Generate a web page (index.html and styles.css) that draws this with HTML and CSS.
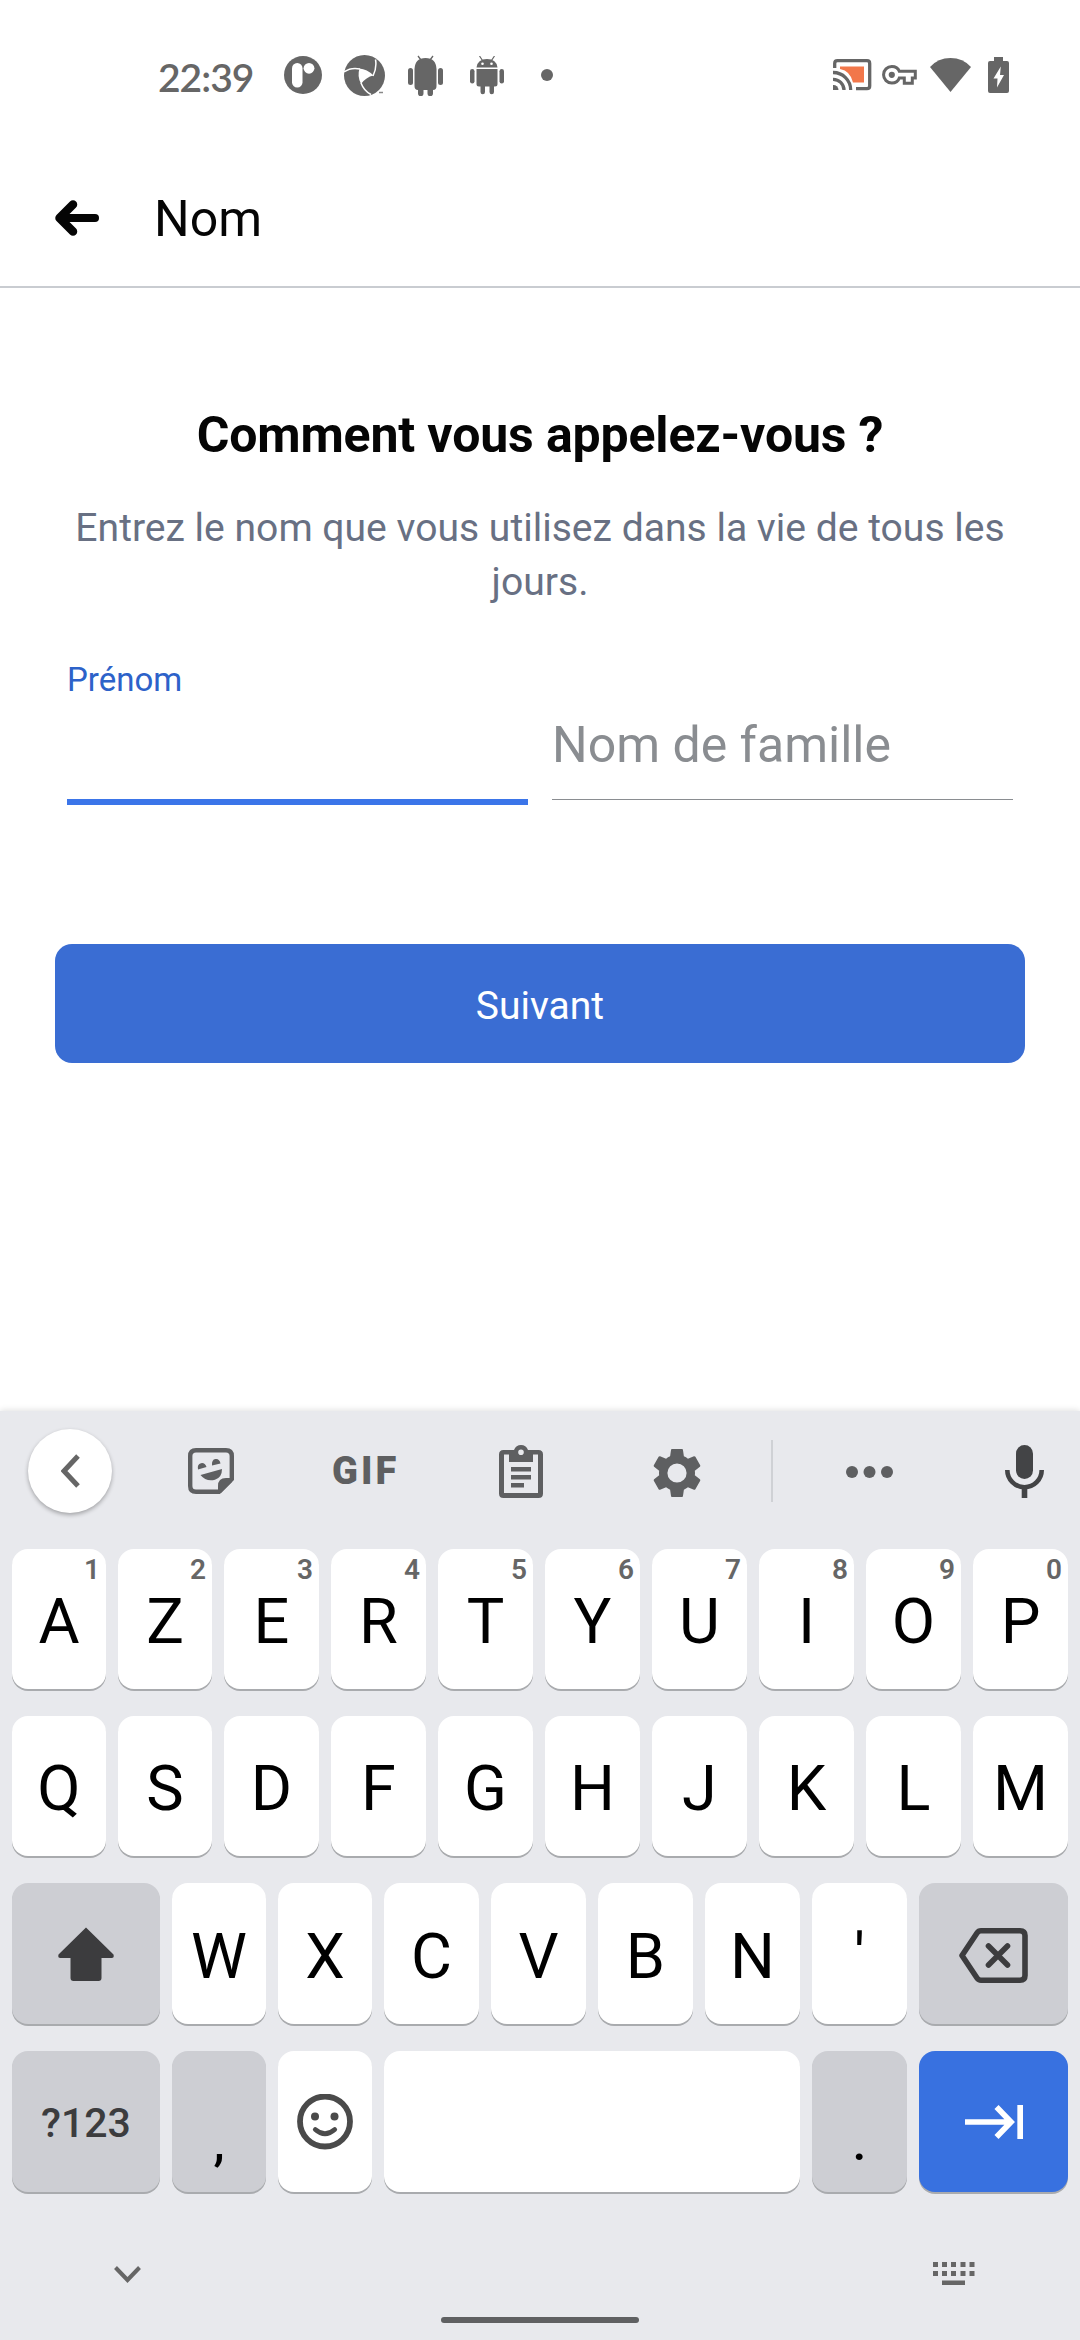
FILE: index.html
```html
<!DOCTYPE html>
<html lang="fr">
<head>
<meta charset="utf-8">
<title>Nom</title>
<link rel="stylesheet" href="styles.css">
</head>
<body>
<div class="screen">
  <div class="status">
    <span class="clock">22:39</span>
    <div class="notifs">
      <svg width="38" height="38" viewBox="0 0 38 38"><circle cx="19" cy="19" r="19" fill="#666"/><rect x="8" y="7" width="10.5" height="24.5" rx="5.2" fill="#fff"/><circle cx="25" cy="12.3" r="5.4" fill="#fff"/></svg>
      <svg width="41" height="41" viewBox="0 0 41 41"><circle cx="20.5" cy="20.5" r="20.5" fill="#666"/><path d="M15.500 13.500Q23 14 29.500 20.500Q22 22 17 29Q13 21 15.500 13.500Z" fill="#fff"/><path d="M0 17Q7 12 16 14M31.500 4.500Q33 13 29 21M17 28Q20 36 27 39.500" fill="none" stroke="#fff" stroke-width="1.500"/><path d="M27 41l7-3.500 2-1 5 1v3.500z" fill="#fff"/><path d="M35 37.500h4" stroke="#888" stroke-width="1.500"/></svg>
      <svg width="35" height="41" viewBox="0 0 35 41" fill="#666"><path d="M10 1l3 4M25 1l-3 4" stroke="#666" stroke-width="1.300"/><path d="M6.500 14Q7 3 17.500 3T28.500 14V31Q28.500 35 25 35V38.500a2.500 2.500 0 0 1-5.500 0V35H15.500V38.500a2.500 2.500 0 0 1-5.500 0V35Q6.500 35 6.500 31Z"/><rect x="0" y="13" width="5" height="17" rx="2.500"/><rect x="30" y="13" width="5" height="17" rx="2.500"/></svg>
      <svg width="34" height="39" viewBox="0 0 34 39" fill="#666"><path d="M9.500 0l3 4.500M24.500 0l-3 4.500" stroke="#666" stroke-width="1.200"/><path d="M6.500 11.500Q7.500 3 17 3T27.500 11.500Z"/><circle cx="12.500" cy="7.800" r="1.300" fill="#fff"/><circle cx="21.500" cy="7.800" r="1.300" fill="#fff"/><path d="M6.500 13H27.500V28Q27.500 30.500 25 30.500H24V36a2.200 2.200 0 0 1-4.500 0V30.500H15V36a2.200 2.200 0 0 1-4.500 0V30.500H9Q6.500 30.500 6.500 28Z"/><rect x="0" y="13" width="4.500" height="14.500" rx="2.200"/><rect x="29.500" y="13" width="4.500" height="14.500" rx="2.200"/></svg>
      <span class="dot"></span>
    </div>
    <div class="system">
      <svg class="cast" width="39" height="32" viewBox="0 0 39 32"><path d="M7 7.500H31V23.500H20Q17.500 12 7 10Z" fill="#f2774a"/><path d="M1.700 9V4.500Q1.700 1.700 4.500 1.700H34Q36.700 1.700 36.700 4.500V27Q36.700 29.700 34 29.700H23M0 13.500A17.500 17.500 0 0 1 17.700 31M0 20.300A10.800 10.800 0 0 1 11 31" fill="none" stroke="#666" stroke-width="3.300"/><path d="M0 26A5 5 0 0 1 5.500 31H0Z" fill="#666"/></svg>
      <svg class="key-icon" width="35" height="20" viewBox="0 0 35 20"><path d="M9.800 1.500C14 1.500 16.500 4 17.300 6.300H33.300V13H30.300V18.300H22.300V13H17.300C16.500 15.500 14 18 9.800 18A8.200 8.200 0 0 1 9.800 1.500Z" fill="none" stroke="#666" stroke-width="3"/><circle cx="9.800" cy="9.800" r="3.100" fill="#666"/></svg>
      <svg class="wifi" width="41" height="34" viewBox="0 0 41 34"><path d="M0 9Q8 0 20.500 0T41 9L20.500 34Z" fill="#666"/></svg>
      <svg class="battery" width="21" height="36" viewBox="0 0 21 36"><path d="M2 4H6V0H15V4H19Q21 4 21 6V34Q21 36 19 36H2Q0 36 0 34V6Q0 4 2 4Z" fill="#666"/><path d="M12.800 9.500L5.500 21.500H9.500L9 30.500L16 18H12Z" fill="#fff"/></svg>
    </div>
  </div>

  <header class="header">
    <svg width="44" height="37" viewBox="0 0 44 37" fill="none" stroke="#050505" stroke-linecap="round" stroke-linejoin="round"><path d="M18 4.500L4.500 18L18 31.500" stroke-width="8.500"/><path d="M7 18H40" stroke-width="8"/></svg>
    <span class="header-title">Nom</span>
  </header>

  <main class="form">
    <h1 class="question">Comment vous appelez-vous ?</h1>
    <p class="help">Entrez le nom que vous utilisez dans la vie de tous les jours.</p>
    <div class="fields">
      <div class="field field-active"><span class="label">Prénom</span></div>
      <div class="field"><span class="placeholder">Nom de famille</span></div>
    </div>
    <div class="submit">Suivant</div>
  </main>

  <section class="keyboard">
    <div class="toolbar">
      <span class="back"><svg width="19" height="34" viewBox="0 0 19 34"><path d="M17 2L3 17L17 32" fill="none" stroke="#666" stroke-width="5"/></svg></span>
      <svg class="sticker" width="46" height="46" viewBox="0 0 46 46"><path d="M8 2.200H38Q43.800 2.200 43.800 8V31L31 43.800H8Q2.200 43.800 2.200 38V8Q2.200 2.200 8 2.200Z" fill="none" stroke="#5e5f61" stroke-width="4.400"/><path d="M30 45V38Q30 30 38 30H45L44 34L33 45Z" fill="#5e5f61"/><path d="M10 21.500Q9 16 13 15.200Q17 14.500 18.500 19ZM24 17.500Q23.500 11.500 27.500 11Q31.500 10.500 32.500 15.500ZM12.500 27L34 21Q34 29.500 27 31.800Q18 34 12.500 27Z" fill="#5e5f61"/></svg>
      <span class="gif">GIF</span>
      <svg class="clipboard" width="44" height="53" viewBox="0 0 44 53" fill="#5e5f61"><path fill-rule="evenodd" d="M4.500 5H15Q17 0 22 0T29 5H39.500Q44 5 44 9.500V48.500Q44 53 39.500 53H4.500Q0 53 0 48.500V9.500Q0 5 4.500 5ZM5 9.500V48H39V9.500H34V17H10V9.500ZM22 4.500A2.800 2.800 0 1 0 22 10.100A2.800 2.800 0 1 0 22 4.500Z"/><path d="M12 22H32V26.500H12ZM12 30H32V34.500H12ZM12 38H25V42.500H12Z"/></svg>
      <svg class="gear" width="48" height="48" viewBox="2 2 20 20"><path fill="#5e5f61" d="M19.430 12.980c.04-.32.070-.64.070-.98s-.03-.66-.07-.98l2.110-1.650c.19-.15.240-.42.120-.64l-2-3.460c-.12-.22-.39-.3-.61-.22l-2.490 1c-.52-.4-1.080-.73-1.690-.98l-.38-2.650C14.460 2.180 14.250 2 14 2h-4c-.25 0-.46.180-.49.420l-.38 2.650c-.61.250-1.170.590-1.690.980l-2.490-1c-.23-.09-.49 0-.61.220l-2 3.460c-.13.220-.07.490.120.640l2.110 1.650c-.04.320-.07.650-.07.980s.03.660.070.980l-2.110 1.650c-.19.150-.24.420-.12.640l2 3.460c.12.220.39.300.61.220l2.490-1c.52.400 1.080.730 1.690.980l.38 2.650c.03.240.240.420.490.420h4c.25 0 .46-.18.490-.42l.38-2.650c.61-.25 1.170-.59 1.690-.98l2.490 1c.23.090.490 0 .61-.22l2-3.460c.12-.22.070-.49-.12-.64l-2.110-1.650zM12 16a4 4 0 1 1 0-8 4 4 0 0 1 0 8z"/></svg>
      <span class="separator"></span>
      <svg class="more" width="48" height="12" viewBox="0 0 48 12" fill="#5e5f61"><circle cx="6" cy="6" r="6"/><circle cx="23.500" cy="6" r="6"/><circle cx="41" cy="6" r="6"/></svg>
      <svg class="mic" width="39" height="53" viewBox="0 0 39 53"><rect x="11" y="0" width="17" height="34" rx="8.500" fill="#434446"/><path d="M2.300 25A17.200 17.200 0 0 0 36.700 25" fill="none" stroke="#434446" stroke-width="4.600"/><path d="M16.700 41h5.600v12h-5.600z" fill="#434446"/></svg>
    </div>

    <div class="keys">
      <div class="row row-letters">
        <div class="key">A<span class="hint">1</span></div><div class="key">Z<span class="hint">2</span></div><div class="key">E<span class="hint">3</span></div><div class="key">R<span class="hint">4</span></div><div class="key">T<span class="hint">5</span></div><div class="key">Y<span class="hint">6</span></div><div class="key">U<span class="hint">7</span></div><div class="key">I<span class="hint">8</span></div><div class="key">O<span class="hint">9</span></div><div class="key">P<span class="hint">0</span></div>
      </div>
      <div class="row row-letters">
        <div class="key">Q</div><div class="key">S</div><div class="key">D</div><div class="key">F</div><div class="key">G</div><div class="key">H</div><div class="key">J</div><div class="key">K</div><div class="key">L</div><div class="key">M</div>
      </div>
      <div class="row row-shift">
        <div class="key key-icon-only key-grey"><svg width="58" height="55" viewBox="0 0 58 55"><path d="M29 1.500L56.500 28.500Q57.500 32 54.500 32H44.500V52Q44.500 55 41.500 55H16.500Q13.500 55 13.500 52V32H3.500Q.5 32 1.500 28.500Z" fill="#3c3c3e"/></svg></div>
        <div class="key">W</div><div class="key">X</div><div class="key">C</div><div class="key">V</div><div class="key">B</div><div class="key">N</div><div class="key">'</div>
        <div class="key key-icon-only key-delete key-grey"><svg width="69" height="55" viewBox="0 0 69 55" fill="none" stroke="#3c3c3e" stroke-width="5.600" stroke-linejoin="round"><path d="M22 2.800H61Q66 2.800 66 7.500V47.500Q66 52.200 61 52.200H22Q19.500 52.200 18 50L3 27.500L18 5Q19.500 2.800 22 2.800Z"/><path d="M29.500 18L48.500 37M48.500 18L29.500 37" stroke-linecap="round"/></svg></div>
      </div>
      <div class="row row-space">
        <div class="key key-grey key-mode">?123</div>
        <div class="key key-grey key-punct">,</div>
        <div class="key key-icon-only"><svg width="56" height="56" viewBox="0 0 56 56"><circle cx="28" cy="27.500" r="25" fill="none" stroke="#4a4a4a" stroke-width="5.800"/><circle cx="18" cy="22.500" r="4" fill="#4a4a4a"/><circle cx="37.500" cy="22.500" r="4" fill="#4a4a4a"/><path d="M18.300 35.500Q28 44 37.700 35.500" fill="none" stroke="#4a4a4a" stroke-width="4.800" stroke-linecap="round"/></svg></div>
        <div class="key"></div>
        <div class="key key-grey key-punct">.</div>
        <div class="key key-icon-only key-enter"><svg width="58" height="34" viewBox="0 0 58 34" fill="none" stroke="#fff" stroke-width="5.700"><path d="M0 17H46M31.500 2L46 17L31.500 32M55.200 0V34"/></svg></div>
      </div>
    </div>

    <div class="navbar">
      <svg class="collapse" width="27" height="17" viewBox="0 0 27 17"><path d="M1.500 1.500L13.500 14L25.500 1.500" fill="none" stroke="#666" stroke-width="4"/></svg>
      <svg class="switch" width="42" height="24" viewBox="0 0 42 24" fill="#666"><path d="M0 0h5v5H0zM9 0h5v5H9zM18 0h5v5h-5zM27.500 0h5v5h-5zM36.500 0h5v5h-5zM0 9h5v5H0zM9 9h5v5H9zM18 9h5v5h-5zM27.500 9h5v5h-5zM36.500 9h5v5h-5zM9 18.500h23v4.500H9z"/></svg>
    </div>
    <div class="home"></div>
  </section>
</div>
</body>
</html>
```
FILE: styles.css
```css
* { box-sizing: border-box; }
body { margin: 0; background: #fff; font-family: Roboto, "Liberation Sans", sans-serif; color: #050505; }
svg { display: block; flex: none; }
.screen { width: 1080px; height: 2340px; display: flex; flex-direction: column; overflow: hidden; background: #fff; }

/* Status bar */
.status { height: 150px; display: flex; align-items: center; padding: 0 71px 0 158px; }
.clock { width: 126px; font-family: Lato, Roboto, sans-serif; font-weight: 600; font-size: 39px; line-height: 48px; letter-spacing: -1px; color: #666; padding-top: 3px; }
.notifs { display: flex; align-items: center; gap: 23px; }
.dot { width: 12px; height: 12px; border-radius: 50%; background: #666; margin-left: 14px; }
.notifs svg:nth-child(2) { margin-left: -1px; }
.notifs svg:nth-child(4) { margin-left: 4px; }
.system { display: flex; align-items: center; margin-left: auto; }
.key-icon { margin-left: 10px; }
.wifi { margin-left: 13px; }
.battery { margin-left: 17px; }

/* Header */
.header { height: 138px; display: flex; align-items: center; gap: 55px; padding-left: 55px; border-bottom: 2px solid #c9ccd1; }
.header-title { font-size: 50px; line-height: 60px; padding-top: 2px; }

/* Form */
.form { height: 1123px; padding: 117px 55px 0; display: flex; flex-direction: column; }
.question { margin: 0; font-size: 50px; line-height: 60px; font-weight: 700; letter-spacing: -0.15px; text-align: center; white-space: nowrap; }
.help { margin: 36px 0 0; font-size: 39.1px; line-height: 54px; color: #687083; text-align: center; }
.fields { margin: 51px 12px 0; display: grid; grid-template-columns: 1fr 1fr; gap: 24px; height: 145px; }
.field { height: 140px; border-bottom: 1px solid #8a8d91; padding-top: 55px; }
.field-active { height: 145px; border-bottom: 6px solid #3b75e9; padding-top: 0; }
.label { display: block; font-size: 33px; line-height: 40px; color: #2d62c9; }
.placeholder { display: block; font-size: 50px; line-height: 60px; color: #8a8d91; }
.submit { margin-top: 139px; height: 119px; border-radius: 17px; background: #3a6dd3; color: #fff; font-size: 39px; line-height: 125px; text-align: center; }

/* Keyboard */
.keyboard { height: 929px; background: #e8e9ed; box-shadow: 0 -1px 6px rgba(0, 0, 0, .12); display: flex; flex-direction: column; }
.toolbar { height: 138px; display: flex; align-items: center; padding: 0 36px 18px 28px; }
.back { width: 84px; height: 84px; border-radius: 50%; background: #fff; box-shadow: 0 2px 4px rgba(0, 0, 0, .3); display: flex; align-items: center; justify-content: center; flex: none; }
.sticker { margin-left: 76px; }
.gif { width: 68px; margin-left: 98px; font-weight: 900; font-size: 38px; line-height: 44px; letter-spacing: 3px; color: #5e5f61; }
.clipboard { margin-left: 99px; }
.gear { margin: 4px 0 0 110px; }
.separator { width: 2px; height: 62px; background: #cfd1d5; margin-left: 70px; }
.more { margin: 2px 0 0 73px; }
.mic { margin-left: auto; }

.keys { padding: 0 12px; display: flex; flex-direction: column; gap: 27px; }
.row { display: grid; gap: 12px; grid-template-rows: 100%; }
.row-letters { height: 140px; grid-template-columns: repeat(2, 94px) repeat(8, 95px); }
.row-shift { height: 141px; grid-template-columns: 148px repeat(2, 94px) repeat(5, 95px) 149px; }
.row-space { height: 141px; grid-template-columns: 148px 94px 94px 416px 95px 149px; }
.key { position: relative; border-radius: 16px; background: #fff; box-shadow: 0 2px 0 #a9abae; color: #000; font-size: 63px; line-height: 145px; text-align: center; }
.row-shift .key { line-height: 147px; }
.key-icon-only { display: flex; align-items: center; justify-content: center; }
.key-delete { padding-top: 4px; }
.key-grey { background: #cdced3; }
.key-enter { background: #3871e0; }
.row-space .key-mode { font-size: 41px; font-weight: 500; line-height: 144px; color: #3c3c3e; }
.row-space .key-punct { font-size: 50px; font-weight: 500; line-height: 184px; }
.hint { position: absolute; top: 7px; right: 6px; font-size: 28px; line-height: 28px; font-weight: 600; color: #666; }

.navbar { display: flex; align-items: center; justify-content: space-between; margin-top: 69px; height: 26px; padding: 0 105px 0 114px; }
.home { width: 198px; height: 6px; border-radius: 3px; background: #5f6062; margin: 30px auto 0; }
```
